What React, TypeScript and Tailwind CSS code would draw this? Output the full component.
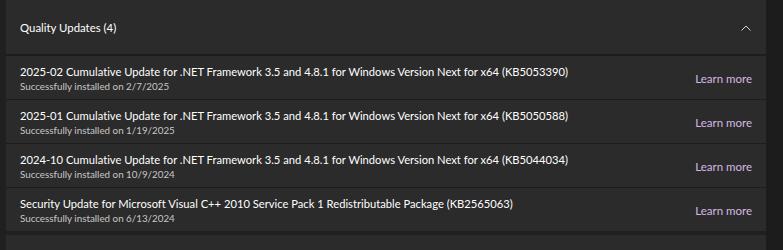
import React from "react";

const rows = [
  { t: "2025-02 Cumulative Update for .NET Framework 3.5 and 4.8.1 for Windows Version Next for x64 (KB5053390)", d: "Successfully installed on 2/7/2025" },
  { t: "2025-01 Cumulative Update for .NET Framework 3.5 and 4.8.1 for Windows Version Next for x64 (KB5050588)", d: "Successfully installed on 1/19/2025" },
  { t: "2024-10 Cumulative Update for .NET Framework 3.5 and 4.8.1 for Windows Version Next for x64 (KB5044034)", d: "Successfully installed on 10/9/2024" },
  { t: "Security Update for Microsoft Visual C++ 2010 Service Pack 1 Redistributable Package (KB2565063)", d: "Successfully installed on 6/13/2024" },
];

export default function App() {
  return (
    <div className="w-[783px] h-[250px] overflow-hidden bg-[#1c1c1c] flex font-['Lato','Noto_Sans',sans-serif] [font-variant-ligatures:none]">
      <div className="w-[766px] bg-[#202020] pl-[6px] flex flex-col">
        <div className="h-[55px] shrink-0 bg-[#2b2b2b] flex items-center pl-[14px] pr-[15px] pt-[1px] text-[11.4px] text-[#ffffff] border-b border-[#1d1d1d]">
          <span className="flex-1">Quality Updates (4)</span>
          <svg width="10" height="6" viewBox="0 0 10 6" fill="none" stroke="#d0d0d0" strokeWidth="1">
            <path d="M0.5 5.5 L5 1 L9.5 5.5" />
          </svg>
        </div>
        {rows.map((r, i) => (
          <div key={i} className="h-[44px] shrink-0 bg-[#2b2b2b] flex items-center pl-[14px] pr-[14px] pt-[3px] border-t border-[#1d1d1d] first:border-t-0">
            <div className="flex-1 flex flex-col">
              <span className="text-[11.2px] leading-[14px] text-[#ffffff]">{r.t}</span>
              <span className="text-[9.8px] leading-[14px] text-[#c8c8c8]">{r.d}</span>
            </div>
            <span className="text-[11.5px] text-[#d6b9e3]">Learn more</span>
          </div>
        ))}
        <div className="mt-[4px] h-[20px] shrink-0 bg-[#2b2b2b]" />
      </div>
    </div>
  );
}
